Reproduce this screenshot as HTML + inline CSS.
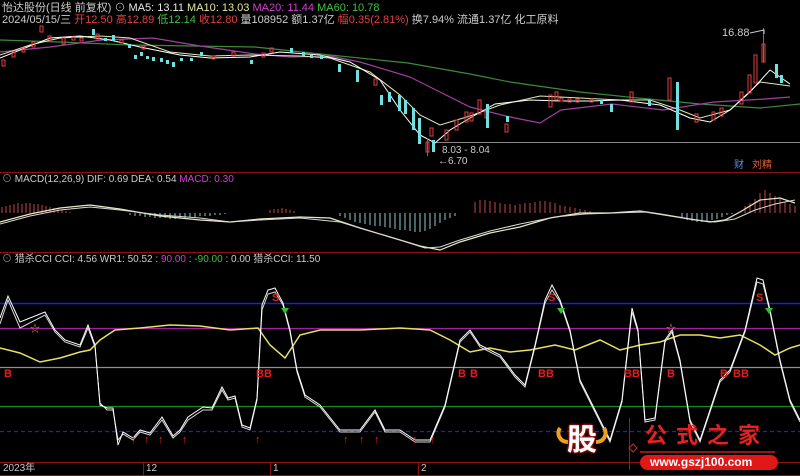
<!DOCTYPE html>
<html><head><meta charset="utf-8"><style>
html,body{margin:0;padding:0;background:#000;}
body{width:800px;height:476px;overflow:hidden;position:relative;font-family:"Liberation Sans","Noto Sans CJK SC",sans-serif;}
.t{position:absolute;font-size:11px;white-space:nowrap;color:#ccc;line-height:12px;}
</style></head><body>
<svg width="800" height="476" style="position:absolute;left:0;top:0" xmlns="http://www.w3.org/2000/svg">
<line x1="0" y1="172.5" x2="800" y2="172.5" stroke="#8a1414"/>
<line x1="0" y1="252.5" x2="800" y2="252.5" stroke="#8a1414"/>
<line x1="0" y1="462.5" x2="800" y2="462.5" stroke="#8a1414"/>
<line x1="0" y1="475.5" x2="800" y2="475.5" stroke="#8a1414"/>
<g stroke="#8a1414"><line x1="143.5" y1="462" x2="143.5" y2="476"/><line x1="270.5" y1="462" x2="270.5" y2="476"/><line x1="418.5" y1="462" x2="418.5" y2="476"/></g>
<line x1="435" y1="142.5" x2="800" y2="142.5" stroke="#888"/>
<polyline fill="none" stroke="#3c8a3c" stroke-width="1.2" points="0,40 60,42 130,45 255,47 330,55 408,63 470,74 510,82 580,92 638,98 700,104 760,108 800,104"/>
<polyline fill="none" stroke="#a040a0" stroke-width="1.2" points="0,52 50,47 102,40 153,38 200,46 255,54 290,57 330,56 360,62 410,77 470,107 510,117 540,123 561,110 612,104 663,110 714,102 765,99 790,97"/>
<polyline fill="none" stroke="#e8e8b0" stroke-width="1" points="0,55 30,45 60,38 100,36 130,38 170,52 210,56 250,55 300,56 330,58 370,72 400,95 420,115 440,125 470,116 500,105 540,96 580,98 620,100 650,100 680,110 700,118 730,110 760,82 790,86"/>
<polyline fill="none" stroke="#ffffff" stroke-width="1" points="0,58 20,50 50,38 80,36 110,40 140,47 180,55 210,58 250,57 280,52 320,55 350,62 380,80 400,110 420,135 435,143 450,130 470,118 495,104 530,100 560,101 590,101 620,100 660,105 690,118 710,122 730,110 750,92 770,70 790,84"/>
<g stroke="#e04040" fill="none">
<rect x="2" y="60" width="3" height="6"/><rect x="12" y="52" width="3" height="5"/><rect x="22" y="48" width="3" height="4"/><rect x="32" y="42" width="3" height="5"/><rect x="40" y="26" width="3" height="6"/><rect x="48" y="36" width="3" height="4"/><rect x="62" y="38" width="3" height="6"/><rect x="72" y="37" width="3" height="3"/><rect x="80" y="38" width="3" height="3"/>
<rect x="96" y="34" width="3" height="5"/><rect x="120" y="40" width="3" height="3"/><rect x="142" y="46" width="3" height="3"/><rect x="212" y="56" width="3" height="3"/><rect x="232" y="52" width="3" height="4"/><rect x="262" y="53" width="3" height="4"/><rect x="270" y="48" width="3" height="4"/>
<rect x="374" y="79" width="3" height="6"/><rect x="445" y="130" width="3" height="10"/><rect x="455" y="120" width="3" height="10"/>
<rect x="465" y="112" width="3" height="10"/><rect x="470" y="113" width="3" height="8"/><rect x="478" y="100" width="3" height="14"/>
<rect x="485" y="110" width="3" height="8"/><rect x="549" y="95" width="3" height="12"/><rect x="555" y="92" width="3" height="8"/>
<rect x="560" y="98" width="3" height="3"/><rect x="568" y="99" width="3" height="3"/><rect x="576" y="99" width="3" height="3"/><rect x="590" y="99" width="3" height="3"/>
<rect x="630" y="92" width="3" height="10"/><rect x="668" y="78" width="3" height="22"/><rect x="740" y="92" width="3" height="12"/>
<rect x="748" y="75" width="3" height="18"/><rect x="754" y="55" width="3" height="28"/><rect x="762" y="44" width="3" height="18"/>
<rect x="695" y="114" width="3" height="8"/><rect x="712" y="112" width="3" height="8"/><rect x="720" y="108" width="3" height="8"/>
<line x1="763.5" y1="28" x2="763.5" y2="62"/><line x1="427.5" y1="138" x2="427.5" y2="156"/>
<rect x="426" y="142" width="3" height="10"/><rect x="505" y="124" width="3" height="8"/><rect x="430" y="128" width="3" height="8"/>
</g>
<g fill="#70e0e0">
<rect x="92" y="29" width="3" height="6"/><rect x="104" y="38" width="3" height="3"/><rect x="112" y="35" width="3" height="6"/><rect x="128" y="44" width="3" height="4"/><rect x="134" y="55" width="3" height="4"/><rect x="140" y="52" width="3" height="4"/><rect x="146" y="56" width="3" height="3"/>
<rect x="152" y="57" width="3" height="4"/><rect x="160" y="58" width="3" height="4"/><rect x="166" y="60" width="3" height="4"/><rect x="172" y="62" width="3" height="5"/><rect x="180" y="58" width="3" height="3"/><rect x="190" y="58" width="3" height="3"/><rect x="290" y="48" width="3" height="5"/>
<rect x="338" y="64" width="3" height="8"/><rect x="356" y="70" width="3" height="12"/><rect x="380" y="95" width="3" height="10"/>
<rect x="388" y="92" width="3" height="10"/><rect x="398" y="95" width="3" height="16"/><rect x="404" y="100" width="3" height="14"/>
<rect x="412" y="108" width="3" height="22"/><rect x="418" y="118" width="3" height="26"/><rect x="432" y="140" width="3" height="12"/>
<rect x="486" y="104" width="3" height="24"/><rect x="506" y="116" width="3" height="6"/><rect x="610" y="104" width="3" height="8"/>
<rect x="676" y="82" width="3" height="48"/><rect x="648" y="100" width="3" height="6"/><rect x="775" y="64" width="3" height="14"/>
<rect x="780" y="75" width="3" height="8"/><rect x="600" y="100" width="3" height="4"/><rect x="200" y="52" width="3" height="4"/>
<rect x="250" y="60" width="3" height="4"/><rect x="320" y="55" width="3" height="4"/><rect x="302" y="52" width="3" height="4"/><rect x="310" y="55" width="3" height="3"/>
</g>
<path stroke="#c04848" stroke-width="1" d="M2 213V207M6 213V206M10 213V205M14 213V204M18 213V203M22 213V204M26 213V203M30 213V203M34 213V204M38 213V204M42 213V205M46 213V206M50 213V207M54 213V208M58 213V209M62 213V210M66 213V211M70 213V212 M270 213V210M274 213V209M278 213V209M282 213V208M286 213V209M290 213V210M294 213V211 M475 213V202M480 213V200M485 213V200M490 213V201M495 213V202M500 213V203M505 213V204M510 213V204M515 213V205M520 213V204M525 213V203M530 213V203M535 213V202M540 213V201M545 213V201M550 213V202M555 213V203M560 213V205M565 213V206M570 213V207M575 213V208M580 213V209M585 213V210M590 213V211 M745 213V206M750 213V203M755 213V199M760 213V193M765 213V190M770 213V193M775 213V196M780 213V199M785 213V202M790 213V204M795 213V206"/>
<path stroke="#90c8c8" stroke-width="1" d="M130 213V215M135 213V216M140 213V216M145 213V217M150 213V217M155 213V218M160 213V218M165 213V218M170 213V219M175 213V219M180 213V218M185 213V218M190 213V217M195 213V217M200 213V216M205 213V216M210 213V216M215 213V215M220 213V215M225 213V214 M340 213V216M345 213V218M350 213V220M355 213V222M360 213V223M365 213V224M370 213V225M375 213V226M380 213V226M385 213V227M390 213V228M395 213V229M400 213V230M405 213V230M410 213V231M415 213V232M420 213V232M425 213V231M430 213V229M435 213V226M440 213V223M445 213V220M450 213V218M455 213V216 M682 213V218M687 213V220M692 213V221M697 213V222M702 213V222M707 213V221M712 213V220M717 213V219M722 213V217M727 213V215M732 213V214"/>
<polyline fill="none" stroke="#e8e8c0" stroke-width="1.2" points="0,222 30,214 60,208 90,205 120,209 160,216 200,220 230,222 260,219 300,217 330,218 360,228 390,237 420,246 440,250 460,242 490,233 520,227 550,218 580,213 610,213 640,211 660,214 690,219 710,222 725,220 740,212 760,200 780,198 795,203"/>
<polyline fill="none" stroke="#d8d8d8" stroke-width="1" points="0,224 30,216 60,210 90,207 120,210 160,215 200,218 230,222 260,220 300,218 340,222 370,231 400,240 425,248 440,247 460,240 490,231 520,224 555,217 585,214 615,213 645,212 670,216 695,220 715,222 735,219 755,210 775,204 795,200"/>
<line x1="0" y1="303.5" x2="800" y2="303.5" stroke="#2020d0" stroke-width="1.5"/>
<line x1="0" y1="328.5" x2="800" y2="328.5" stroke="#a020a0" stroke-width="1.2"/>
<line x1="0" y1="367.5" x2="800" y2="367.5" stroke="#909090" stroke-width="1.2"/>
<line x1="0" y1="406.5" x2="800" y2="406.5" stroke="#1a8a1a" stroke-width="1.2"/>
<line x1="0" y1="431.5" x2="800" y2="431.5" stroke="#2020d0" stroke-width="1.2" stroke-dasharray="4,3"/>
<polyline fill="none" stroke="#e8e060" stroke-width="1.5" points="0,348 20,353 40,362 60,358 80,352 90,350 100,340 115,330 140,328 170,325 200,326 230,330 258,328 270,345 285,358 300,335 320,330 360,330 400,328 430,330 450,340 470,352 490,348 510,352 530,350 555,345 575,350 600,340 620,350 640,345 660,342 680,335 700,335 720,338 740,335 760,345 775,355 790,348 800,345"/>
<polyline fill="none" stroke="#d8d8d8" stroke-width="1" points="0,324 8,300 20,328 45,315 55,332 65,342 80,347 88,328 95,347 100,403 107,410 113,410 118,440 123,434 133,440 140,432 150,435 162,420 173,438 180,432 188,420 203,410 212,410 222,390 228,400 235,398 242,427 250,430 257,400 262,310 268,294 275,292 283,305 290,332 297,372 305,397 320,407 340,432 360,432 375,412 385,432 400,432 415,442 430,442 445,407 460,342 470,332 480,347 500,357 515,377 525,387 535,347 545,303 552,290 560,302 570,332 580,382 595,412 610,442 622,402 632,312 638,332 645,422 655,420 665,342 672,332 680,362 690,422 700,442 710,412 720,382 730,372 745,332 757,282 763,284 770,312 780,362 790,402 800,422"/>
<polyline fill="none" stroke="#ffffff" stroke-width="1" points="0,318 8,296 20,322 45,312 55,330 65,340 80,345 88,325 95,345 100,405 107,408 113,408 118,445 123,432 133,438 140,430 150,433 162,417 173,436 180,430 188,417 203,407 212,408 222,387 228,398 235,396 242,425 250,428 257,398 262,305 268,290 275,288 283,303 290,330 297,370 305,395 320,405 340,430 360,430 375,410 385,430 400,430 415,440 430,440 445,405 460,340 470,330 480,345 500,355 515,375 525,385 535,345 545,300 552,285 560,300 570,330 580,380 595,410 610,440 622,400 632,308 638,330 645,420 655,418 665,340 672,330 680,360 690,420 700,440 710,410 720,380 730,370 745,330 757,278 763,280 770,310 780,360 790,400 800,420"/>
<g fill="#e02020" font-size="11" font-family="Liberation Sans">
<text x="144" y="443">↑</text><text x="158" y="443">↑</text><text x="182" y="443">↑</text><text x="255" y="443">↑</text><text x="343" y="443">↑</text><text x="359" y="443">↑</text><text x="374" y="443">↑</text><text x="412" y="443">↑</text><text x="430" y="443">↑</text><text x="131" y="443">↑</text>
</g>
<g fill="#e02020" font-size="11" font-weight="bold" font-family="Liberation Sans">
<text x="4" y="377">B</text><text x="256" y="377">BB</text><text x="458" y="377">B</text><text x="470" y="377">B</text><text x="538" y="377">BB</text><text x="624" y="377">BB</text><text x="667" y="377">B</text><text x="720" y="377">B</text><text x="733" y="377">BB</text>
<text x="272" y="301">S</text><text x="548" y="301">S</text><text x="756" y="301">S</text>
</g>
<g fill="#30c030"><path d="M281 308l4 6 4-6z"/><path d="M557 308l4 6 4-6z"/><path d="M765 308l4 6 4-6z"/></g>
<text x="30" y="332" fill="#e09050" font-size="10">☆</text><text x="666" y="332" fill="#e09050" font-size="10">☆</text>
<polyline fill="none" stroke="#ccc" points="750,33 764,30 764,34"/>
<line x1="629.5" y1="418" x2="629.5" y2="470" stroke="#a01818"/>
<path d="M629 448l4 -4 4 4 -4 4z" fill="none" stroke="#c03030"/>
<line x1="640" y1="452" x2="775" y2="452" stroke="#c02020" stroke-width="1.5"/>
<rect x="640" y="455" width="138" height="15" rx="7.5" fill="#e01818"/>
<path d="M560 428c-4 6 0 14 8 14M604 428c4 6 0 14 -8 14" fill="none" stroke="#f0a020" stroke-width="4"/>
</svg>
<div class="t" style="left:2px;top:2px;color:#ccc;font-size:11px">怡达股份(日线 前复权) <span style="color:#aaa">⊙</span> <span style="color:#e8e8e8">MA5: 13.11</span> <span style="color:#e8e8a0">MA10: 13.03</span> <span style="color:#d040d0">MA20: 11.44</span> <span style="color:#40c040">MA60: 10.78</span></div>
<div class="t" style="left:2px;top:14px">2024/05/15/三 <span style="color:#e04040">开12.50</span> <span style="color:#e04040">高12.89</span> <span style="color:#40c040">低12.14</span> <span style="color:#e04040">收12.80</span> 量108952 额1.37亿 <span style="color:#e04040">幅0.35(2.81%)</span> 换7.94% 流通1.37亿 化工原料</div>
<div class="t" style="left:722px;top:27px">16.88</div>
<div class="t" style="left:442px;top:145px;font-size:10px">8.03 - 8.04</div>
<div class="t" style="left:438px;top:156px;font-size:10px">←6.70</div>
<div class="t" style="left:734px;top:160px;color:#6090e0;font-size:10px">财</div>
<div class="t" style="left:752px;top:160px;color:#e06040;font-size:10px">刘精</div>
<div class="t" style="left:2px;top:174px;font-size:10px"><span style="color:#888">⊙</span> MACD(12,26,9) DIF: 0.69 DEA: 0.54 <span style="color:#d040d0">MACD: 0.30</span></div>
<div class="t" style="left:2px;top:254px;font-size:10px"><span style="color:#888">⊙</span> 猎杀CCI CCI: 4.56 WR1: 50.52 : <span style="color:#d040d0">90.00</span> : <span style="color:#40c040">-90.00</span> : 0.00 猎杀CCI: 11.50</div>
<div class="t" style="left:3px;top:463px;font-size:10px;color:#c8c8c8">2023年</div>
<div class="t" style="left:146px;top:463px;font-size:10px">12</div>
<div class="t" style="left:273px;top:463px;font-size:10px">1</div>
<div class="t" style="left:421px;top:463px;font-size:10px">2</div>
<div class="t" style="left:567px;top:424px;font-size:30px;line-height:34px;font-weight:bold;color:#fff;text-shadow:0 0 3px #e02020,0 0 2px #e02020">股</div>
<div class="t" style="left:645px;top:424px;font-size:22px;line-height:24px;font-weight:bold;color:#e82020;letter-spacing:9px">公式之家</div>
<div class="t" style="left:650px;top:456px;font-size:12px;line-height:13px;font-weight:bold;color:#fff">www.gszj100.com</div>
</body></html>
